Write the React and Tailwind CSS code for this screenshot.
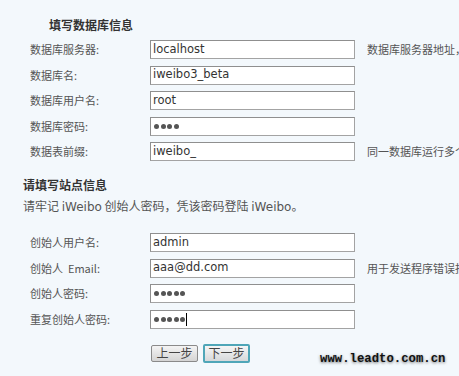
import React from "react";

const cjk = '"Noto Sans CJK SC", "Noto Sans", sans-serif';
const latin = '"DejaVu Sans", "Noto Sans CJK SC", sans-serif';

function Field({ children, caret }) {
  return (
    <div
      className="shrink-0 w-[205px] h-[19px] bg-white border border-[#a3a3a3] border-t-[#8f8f8f] border-l-[#8f8f8f] flex items-center pl-[2px] text-[11.5px] text-[#333] leading-none"
      style={{ fontFamily: latin }}
    >
      {children}
      {caret && <span className="inline-block w-[1px] h-[13px] bg-black ml-[1px]" />}
    </div>
  );
}

function Dots({ n }) {
  return (
    <span className="flex gap-[1.5px] items-center ml-[1px]">
      {Array.from({ length: n }).map((_, i) => (
        <span key={i} className="inline-block w-[5px] h-[5px] rounded-full bg-[#555]" />
      ))}
    </span>
  );
}

function Row({ label, children, note, caret }) {
  return (
    <div className="flex items-center h-[19px] w-[600px]">
      <div className="shrink-0 w-[120px] text-[11px] text-[#555] whitespace-pre" style={{ fontFamily: cjk }}>
        {label}
      </div>
      <Field caret={caret}>{children}</Field>
      {note && (
        <div className="shrink-0 ml-[12px] text-[11px] text-[#555] whitespace-nowrap" style={{ fontFamily: cjk }}>
          {note}
        </div>
      )}
    </div>
  );
}

export default function App() {
  return (
    <div className="w-[459px] h-[376px] bg-[#f3f8fc] overflow-hidden relative" style={{ fontFamily: cjk }}>
      <div className="pl-[49px] pt-[18px] h-[32px] text-[12px] font-bold text-[#333] leading-[14px]">
        填写数据库信息
      </div>
      <div className="ml-[30px] mt-[8px] flex flex-col gap-[6.5px]">
        <Row label="数据库服务器:" note="数据库服务器地址，一般为 localhost">localhost</Row>
        <Row label="数据库名:">iweibo3_beta</Row>
        <Row label="数据库用户名:">root</Row>
        <Row label="数据库密码:"><Dots n={4} /></Row>
        <Row label="数据表前缀:" note="同一数据库运行多个 iWeibo 时，请修改前缀">iweibo_</Row>
      </div>
      <div className="ml-[23px] mt-[16px] h-[16px] leading-[16px] text-[12px] font-bold text-[#333]">
        请填写站点信息
      </div>
      <div className="ml-[23px] mt-[5px] h-[16px] leading-[16px] text-[12px] text-[#555] whitespace-nowrap">
        请牢记 <span style={{ fontFamily: latin }} className="text-[12px]">iWeibo</span> 创始人密码，凭该密码登陆{" "}
        <span style={{ fontFamily: latin }} className="text-[12px]">iWeibo</span>。
      </div>
      <div className="ml-[30px] mt-[19px] flex flex-col gap-[6.5px]">
        <Row label="创始人用户名:">admin</Row>
        <Row label="创始人  Email:" note="用于发送程序错误报告">aaa@dd.com</Row>
        <Row label="创始人密码:"><Dots n={5} /></Row>
        <Row label="重复创始人密码:" caret><Dots n={5} /></Row>
      </div>
      <div className="ml-[151px] mt-[15px] flex gap-[5px] items-center">
        <div className="w-[47px] h-[17px] rounded-[2px] border border-[#8a8a8a] bg-gradient-to-b from-[#f4f4f4] to-[#d4d4d4] flex items-center justify-center text-[12px] text-[#444] leading-none">
          上一步
        </div>
        <div className="w-[47px] h-[19px] rounded-[2px] border-2 border-[#4fa6b8] bg-gradient-to-b from-[#f6f6f6] to-[#d6d8da] flex items-center justify-center text-[12px] text-[#444] leading-none">
          下一步
        </div>
      </div>
      <div
        className="absolute left-[320px] top-[351px] text-[12.3px] font-bold text-[#111] leading-[16px] [text-shadow:0_1px_3px_rgba(0,0,0,0.55)]"
        style={{ fontFamily: '"Liberation Mono", monospace' }}
      >
        www.leadto.com.cn
      </div>
    </div>
  );
}
